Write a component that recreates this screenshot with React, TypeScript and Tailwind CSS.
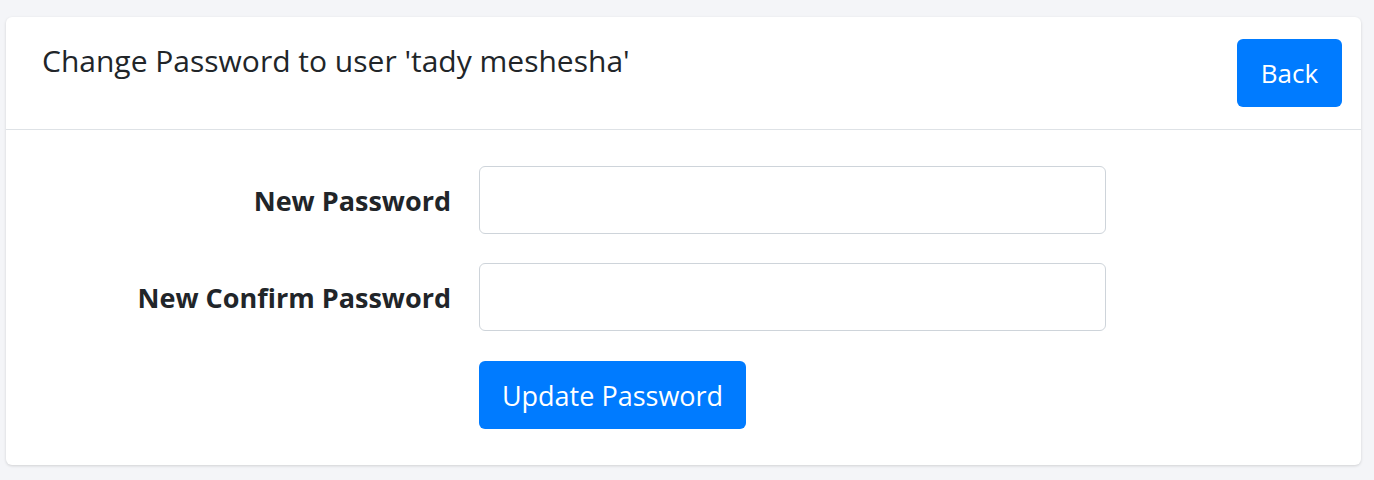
import React from 'react';

const font = { fontFamily: '"Open Sans", "Noto Sans", Arial, sans-serif' };

const ChangePassword: React.FC = () => {
  return (
    <div className="min-h-[480px] bg-[#f4f5f8] pt-[17px] pl-[6px] pr-[13px] text-[#212529]" style={font}>
      <div className="h-[448px] rounded-[6px] bg-white shadow-[0_1px_3px_rgba(0,0,0,0.15)]">
        {/* Header */}
        <div className="flex items-start justify-between border-b border-[#dee2e6] pl-[36px] pr-[19px] pt-[22px] pb-[22px]">
          <h4 className="mt-[2px] text-[30px] leading-[40px] font-normal">Change Password to user 'tady meshesha'</h4>
          <button className="h-[68px] w-[105px] rounded-[6px] bg-[#007bff] text-[26px] text-white">Back</button>
        </div>

        {/* Form */}
        <div className="grid grid-cols-[445px_627px] items-center gap-x-[28px] gap-y-[29px] pt-[36px]">
          <label className="pt-[2px] text-right text-[27px] font-bold">New Password</label>
          <input type="password" className="h-[68px] rounded-[6px] border border-[#ced4da] bg-white" />

          <label className="pt-[2px] text-right text-[27px] font-bold">New Confirm Password</label>
          <input type="password" className="h-[68px] rounded-[6px] border border-[#ced4da] bg-white" />

          <div />
          <div className="pt-[1px]">
            <button className="h-[68px] w-[267px] rounded-[6px] bg-[#007bff] pt-[2px] text-[27px] text-white">Update Password</button>
          </div>
        </div>
      </div>
    </div>
  );
};

export default function App() {
  return <ChangePassword />;
}
